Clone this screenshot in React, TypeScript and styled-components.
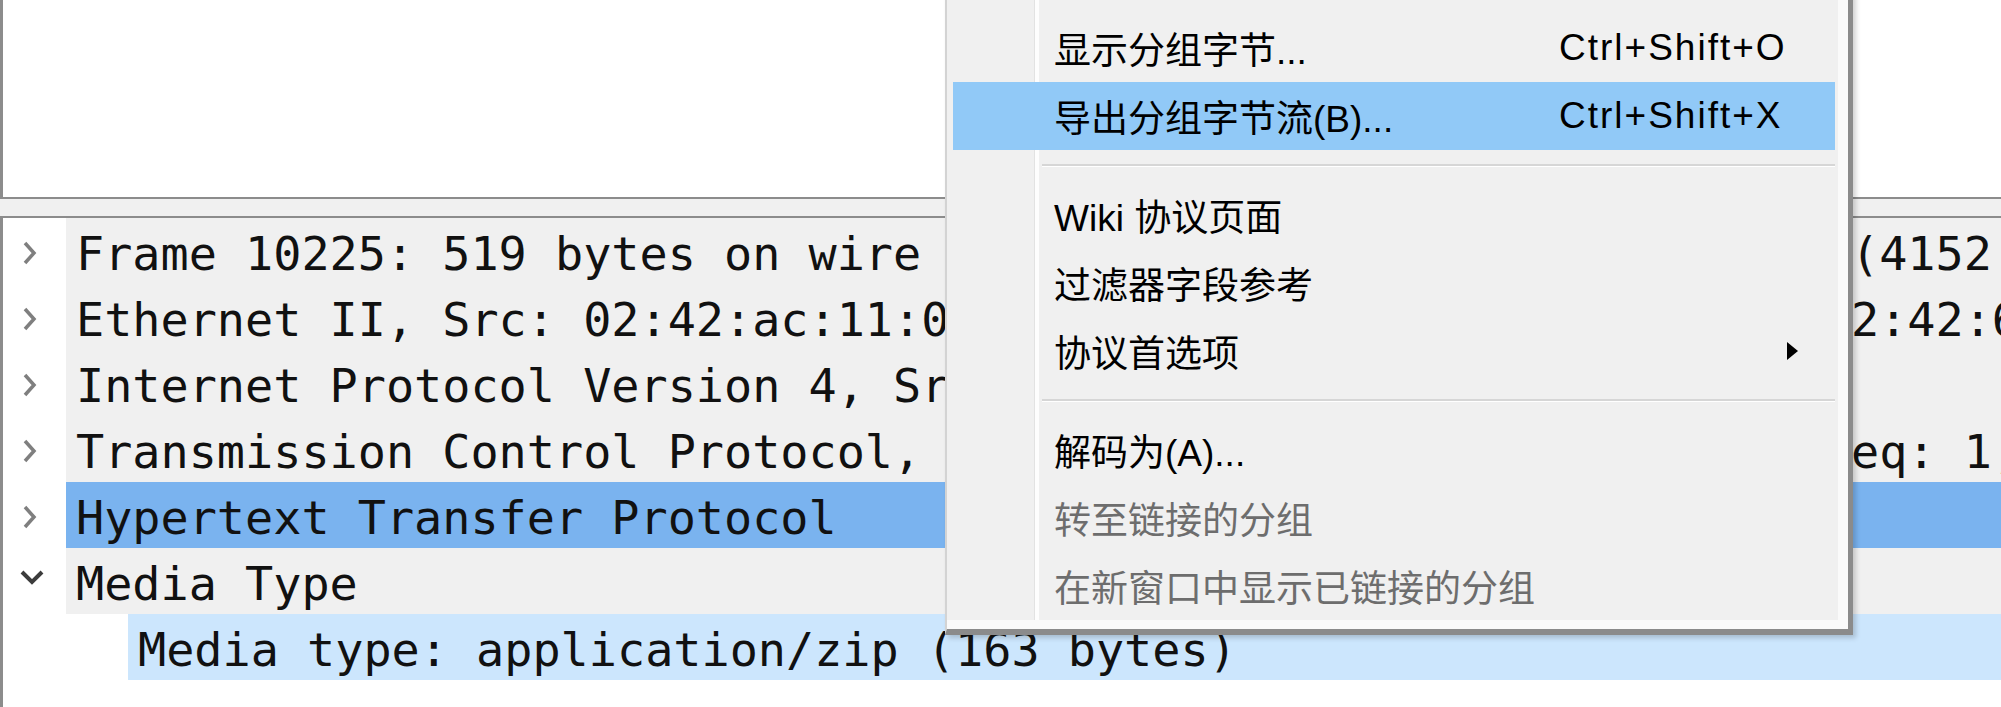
import React from 'react';
import styled, { createGlobalStyle, css } from 'styled-components';

const GlobalStyle = createGlobalStyle`
  html, body {
    margin: 0;
    padding: 0;
    width: 2001px;
    height: 707px;
    overflow: hidden;
    background: #f0f0f0;
  }
  #root {
    width: 2001px;
    height: 707px;
  }
`;

const Window = styled.div`
  position: relative;
  width: 2001px;
  height: 707px;
  overflow: hidden;
  display: flex;
  flex-direction: column;
  background: #f0f0f0;
`;

const PacketList = styled.div`
  box-sizing: border-box;
  height: 199px;
  background: #ffffff;
  border-left: 3px solid #8c8c8c;
  border-bottom: 2px solid #8c8c8c;
`;

const Splitter = styled.div`
  height: 17px;
  background: #f0f0f0;
`;

const DetailPane = styled.div`
  flex: 1;
  background: #ffffff;
  border-top: 2px solid #8c8c8c;
  border-left: 3px solid #8c8c8c;
  overflow: hidden;
`;

const Row = styled.div<{ $depth: number }>`
  display: flex;
  height: 66px;
  padding-left: ${(p) => p.$depth * 62}px;
`;

const Expander = styled.div`
  width: 63px;
  flex: none;
  display: flex;
  align-items: center;
  padding-left: 19px;
  box-sizing: border-box;
`;

type Tone = 'plain' | 'selected' | 'child';

const toneBg: Record<Tone, string> = {
  plain: '#f0f0f0',
  selected: '#7ab3ef',
  child: '#cce6fd',
};

const Label = styled.div<{ $tone: Tone }>`
  flex: 1;
  height: 66px;
  padding-left: 10px;
  background: ${(p) => toneBg[p.$tone]};
  font-family: 'DejaVu Sans Mono', 'Liberation Mono', monospace;
  font-size: 46.8px;
  line-height: 73px;
  color: #111;
  white-space: pre;
  overflow: hidden;
`;

const Menu = styled.div`
  position: absolute;
  left: 945px;
  top: -10px;
  width: 908px;
  box-sizing: border-box;
  padding: 24px 13px 9px 0;
  background: #f0f0f0;
  border-left: 2px solid #d3d3d3;
  border-right: 5px solid #8b8b8b;
  border-bottom: 6px solid #8b8b8b;
  box-shadow: inset -10px -9px 0 #fafafa, 3px 3px 5px rgba(0, 0, 0, 0.18);
  font-family: 'Liberation Sans', 'Noto Sans CJK SC', sans-serif;
  font-size: 37px;
  z-index: 5;

  &::before {
    content: '';
    position: absolute;
    left: 87px;
    top: 0;
    bottom: 9px;
    width: 5px;
    background: linear-gradient(to right, #e2e2e2 0 1px, #fdfdfd 1px);
  }
`;

const Item = styled.div<{ $active?: boolean; $disabled?: boolean }>`
  position: relative;
  z-index: 1;
  display: grid;
  grid-template-columns: 505px 1fr 48px;
  align-items: center;
  height: 68px;
  margin-left: 6px;
  padding-left: 101px;
  color: ${(p) => (p.$disabled ? '#6d6d6d' : '#000')};
  white-space: pre;
  ${(p) =>
    p.$active &&
    css`
      background: #91c9f7;
    `}
`;

const Shortcut = styled.span`
  letter-spacing: 2px;
`;

const SubArrow = styled.svg`
  display: block;
`;

const Separator = styled.div`
  height: 31px;
  display: flex;
  align-items: center;
  padding-left: 95px;

  &::after {
    content: '';
    flex: 1;
    height: 2px;
    background: #d6d6d6;
    border-bottom: 1px solid #ffffff;
  }
`;

const Chevron = ({ open }: { open?: boolean }) =>
  open ? (
    <svg width="26" height="16" viewBox="0 0 26 16" style={{ marginBottom: 8, marginLeft: -3 }}>
      <path d="M3 3 L13 13 L23 3" fill="none" stroke="#3c3c3c" strokeWidth="4" />
    </svg>
  ) : (
    <svg width="16" height="26" viewBox="0 0 16 26" style={{ marginTop: 4 }}>
      <path d="M3 3 L12 13 L3 23" fill="none" stroke="#7f7f7f" strokeWidth="3.5" />
    </svg>
  );

const tree: { text: string; depth: number; tone: Tone; toggle?: 'closed' | 'open' }[] = [
  {
    text: 'Frame 10225: 519 bytes on wire (4152 bits), 519 bytes captured (4152 bits) on interface 0',
    depth: 0,
    tone: 'plain',
    toggle: 'closed',
  },
  {
    text: 'Ethernet II, Src: 02:42:ac:11:00:02 (02:42:ac:11:00:02), Dst: 02:42:61:2f:8a:c7 (02:42:61:2f:8a:c7)',
    depth: 0,
    tone: 'plain',
    toggle: 'closed',
  },
  {
    text: 'Internet Protocol Version 4, Src: 172.17.0.2, Dst: 172.17.0.1',
    depth: 0,
    tone: 'plain',
    toggle: 'closed',
  },
  {
    text: 'Transmission Control Protocol, Src Port: 80, Dst Port: 46490, Seq: 1, Ack: 1, Len: 453',
    depth: 0,
    tone: 'plain',
    toggle: 'closed',
  },
  { text: 'Hypertext Transfer Protocol', depth: 0, tone: 'selected', toggle: 'closed' },
  { text: 'Media Type', depth: 0, tone: 'plain', toggle: 'open' },
  { text: 'Media type: application/zip (163 bytes)', depth: 1, tone: 'child' },
];

type MenuEntry =
  | 'sep'
  | { label: string; shortcut?: string; active?: boolean; disabled?: boolean; submenu?: boolean };

const menu: MenuEntry[] = [
  { label: '显示分组字节...', shortcut: 'Ctrl+Shift+O' },
  { label: '导出分组字节流(B)...', shortcut: 'Ctrl+Shift+X', active: true },
  'sep',
  { label: 'Wiki 协议页面' },
  { label: '过滤器字段参考' },
  { label: '协议首选项', submenu: true },
  'sep',
  { label: '解码为(A)...' },
  { label: '转至链接的分组', disabled: true },
  { label: '在新窗口中显示已链接的分组', disabled: true },
];

export default function App() {
  return (
    <>
      <GlobalStyle />
      <Window>
        <PacketList />
        <Splitter />
        <DetailPane>
          {tree.map((r, i) => (
            <Row key={i} $depth={r.depth}>
              <Expander>{r.toggle && <Chevron open={r.toggle === 'open'} />}</Expander>
              <Label $tone={r.tone}>{r.text}</Label>
            </Row>
          ))}
        </DetailPane>

        <Menu>
          {menu.map((m, i) =>
            m === 'sep' ? (
              <Separator key={i} />
            ) : (
              <Item key={i} $active={m.active} $disabled={m.disabled}>
                <span>{m.label}</span>
                <Shortcut>{m.shortcut ?? ''}</Shortcut>
                <span>
                  {m.submenu && (
                    <SubArrow width="12" height="18" viewBox="0 0 12 18">
                      <path d="M0 0 L11 9 L0 18 Z" fill="#000" />
                    </SubArrow>
                  )}
                </span>
              </Item>
            )
          )}
        </Menu>
      </Window>
    </>
  );
}
